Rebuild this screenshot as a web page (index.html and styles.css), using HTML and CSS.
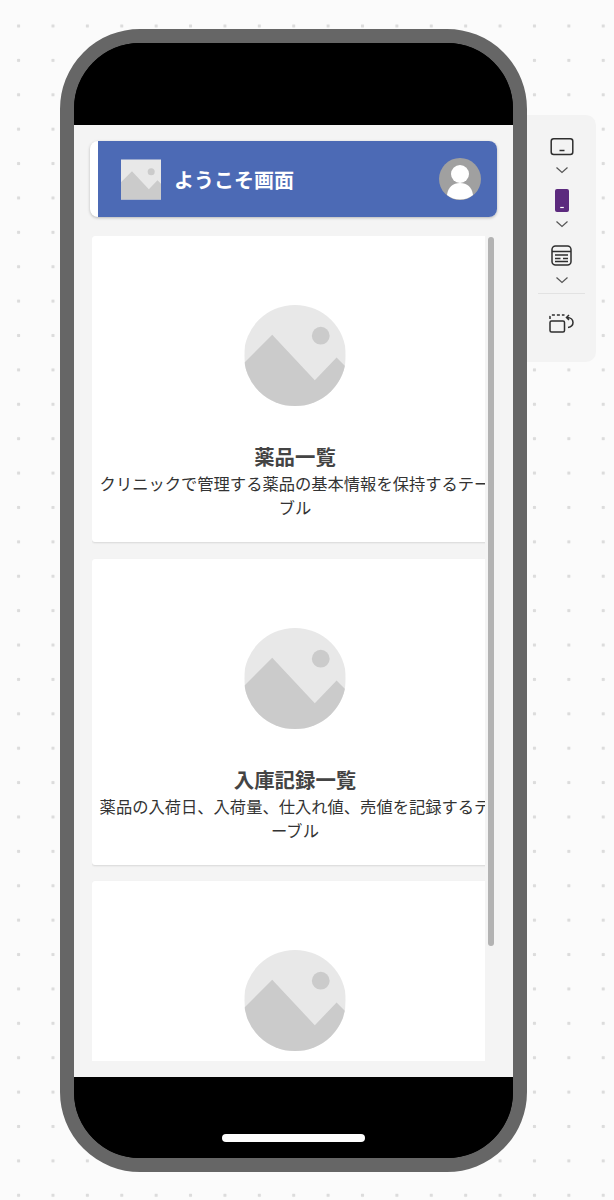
FILE: index.html
```html
<!DOCTYPE html>
<html lang="ja">
<head>
  <meta charset="UTF-8">
  <title>ようこそ画面</title>
  <link rel="stylesheet" href="styles.css">
</head>
<body>
  <svg class="defs" width="0" height="0">
    <symbol id="placeholder" viewBox="0 0 102 102">
      <rect width="102" height="102" fill="#e8e8e8"/>
      <circle cx="77" cy="31" r="9" fill="#cbcbcb"/>
      <path d="M0 58 28 30 71 76 93 53 102 62V102H0Z" fill="#cbcbcb"/>
    </symbol>
  </svg>

  <div class="stage">
    <div class="phone">
      <div class="bezel-top"></div>

      <div class="screen">
        <div class="header">
          <div class="header-bar">
            <svg class="header-img"><use href="#placeholder"/></svg>
            <div class="header-title">ようこそ画面</div>
            <svg class="avatar" viewBox="0 0 42 42">
              <circle cx="21" cy="21" r="21" fill="#a0a0a0"/>
              <circle cx="21" cy="16" r="9" fill="#fff"/>
              <path d="M8 37C9 29 14 25 21 25S33 29 34 37A21 21 0 0 1 8 37Z" fill="#fff"/>
            </svg>
          </div>
        </div>

        <div class="content">
          <div class="list">
            <div class="card">
              <svg class="card-img"><use href="#placeholder"/></svg>
              <div class="card-title">薬品一覧</div>
              <div class="card-text">クリニックで管理する薬品の基本情報を保持するテー<br>ブル</div>
            </div>
            <div class="card">
              <svg class="card-img"><use href="#placeholder"/></svg>
              <div class="card-title">入庫記録一覧</div>
              <div class="card-text">薬品の入荷日、入荷量、仕入れ値、売値を記録するテ<br>ーブル</div>
            </div>
            <div class="card">
              <svg class="card-img"><use href="#placeholder"/></svg>
            </div>
          </div>
          <div class="scrollbar"></div>
        </div>
      </div>

      <div class="bezel-bottom">
        <div class="home-bar"></div>
      </div>
    </div>

    <div class="toolbar">
      <svg class="tool" width="24" height="18" viewBox="0 0 24 18">
        <rect x="1.200" y="0.800" width="21.600" height="15.600" rx="2.500" class="line"/>
        <path d="M9.500 12.500h5" class="line"/>
      </svg>
      <svg class="chevron" width="14" height="8" viewBox="0 0 14 8"><path d="M1.500 1.500 7 6.500l5.500-5" class="thin"/></svg>

      <svg class="tool tool-phone" width="14" height="23" viewBox="0 0 14 23">
        <rect width="14" height="23" rx="2" fill="#5c2a7e"/>
        <path d="M5.200 18.500h3.600" stroke="#fff" stroke-width="1.200"/>
      </svg>
      <svg class="chevron chevron-tight" width="14" height="8" viewBox="0 0 14 8"><path d="M1.500 1.500 7 6.500l5.500-5" class="thin"/></svg>

      <svg class="tool tool-table" width="21" height="21" viewBox="0 0 21 21">
        <rect x="1" y="1" width="19" height="19" rx="3.500" class="line"/>
        <path d="M1 6.500h19M4 10h13M4 13.500h5.500M12 13.500h5M4 16.500h13" class="line"/>
      </svg>
      <svg class="chevron" width="14" height="8" viewBox="0 0 14 8"><path d="M1.500 1.500 7 6.500l5.500-5" class="thin"/></svg>

      <div class="tool-divider"></div>

      <svg class="tool" width="25" height="19" viewBox="0 0 25 19">
        <path d="M1 5V2.500A1.500 1.500 0 0 1 2.500 1H15.500" class="line dashed"/>
        <rect x="1" y="7" width="14.500" height="11" rx="1.500" class="line"/>
        <path d="M18 3.500C22 3.500 24 6 24 8.500S22 13 19 13.500M20 1 17.500 3.500 20 6" class="line"/>
      </svg>
    </div>
  </div>
</body>
</html>
```

FILE: styles.css
```css
html, body {
  margin: 0;
  padding: 0;
}

body {
  height: 1200px;
  overflow: hidden;
  background-color: #fbfbfb;
  background-image: radial-gradient(circle at center, #dcdcdc 1.6px, transparent 2px);
  background-size: 34.4px 34.4px;
  background-position: 1.4px 8.8px;
  font-family: "Noto Sans CJK JP", "Noto Sans", sans-serif;
}

.defs {
  position: absolute;
}

.stage {
  display: flex;
  align-items: flex-start;
  padding: 29px 0 0 60px;
}

.phone {
  box-sizing: border-box;
  width: 467px;
  height: 1143px;
  border: 14px solid #666;
  border-radius: 80px;
  overflow: hidden;
  background: #000;
  display: flex;
  flex-direction: column;
}

.bezel-top {
  height: 82px;
  flex: none;
  background: #000;
}

.bezel-bottom {
  flex: 1;
  background: #000;
  display: flex;
  justify-content: center;
  padding-top: 57px;
}

.home-bar {
  width: 143px;
  height: 8px;
  margin-right: 1px;
  border-radius: 4px;
  background: #fff;
}

.screen {
  height: 952px;
  flex: none;
  box-sizing: border-box;
  padding: 16px;
  background: #f4f4f4;
}

.header {
  height: 76px;
  background: #fff;
  border-radius: 8px;
  box-shadow: 0 1px 3px rgba(0, 0, 0, 0.25);
  display: flex;
}

.header-bar {
  flex: 1;
  margin-left: 8px;
  padding: 0 16px 0 23px;
  background: #4c6ab5;
  border-radius: 0 8px 8px 0;
  display: flex;
  align-items: center;
}

.header-img {
  width: 40px;
  height: 41px;
  flex: none;
}

.header-title {
  flex: 1;
  margin-left: 13px;
  color: #fff;
  font-size: 20px;
  font-weight: 700;
}

.avatar {
  width: 42px;
  height: 42px;
  flex: none;
}

.content {
  display: flex;
  align-items: flex-start;
  margin-top: 19px;
  margin-left: 2px;
  height: 825px;
}

.list {
  width: 393px;
  height: 825px;
  overflow: hidden;
  flex: none;
}

.card {
  box-sizing: border-box;
  width: 406px;
  height: 306px;
  margin-bottom: 16.5px;
  padding: 69px 6px 0;
  background: #fff;
  border-radius: 3px;
  box-shadow: 0 1px 2px rgba(0, 0, 0, 0.12);
  display: flex;
  flex-direction: column;
  align-items: center;
}

.card-img {
  width: 102px;
  height: 101px;
  flex: none;
  border-radius: 50%;
}

.card-title {
  margin-top: 36px;
  color: #444;
  font-size: 20.4px;
  font-weight: 700;
  line-height: 28px;
  white-space: nowrap;
}

.card-text {
  margin-top: 1px;
  color: #333;
  font-size: 16.3px;
  line-height: 24px;
  text-align: center;
  white-space: nowrap;
}

.scrollbar {
  width: 6px;
  height: 709px;
  margin: 1px 0 0 3px;
  border-radius: 3px;
  background: #b3b3b3;
  flex: none;
}

.toolbar {
  width: 69px;
  height: 247px;
  margin-top: 86px;
  box-sizing: border-box;
  padding-top: 23px;
  background: #f3f3f3;
  border-radius: 0 10px 10px 0;
  display: flex;
  flex-direction: column;
  align-items: center;
}

.line {
  fill: none;
  stroke: #2e2e2e;
  stroke-width: 1.5;
}

.dashed {
  stroke-dasharray: 3 2;
}

.thin {
  fill: none;
  stroke: #555;
  stroke-width: 1.2;
}

.chevron {
  margin-top: 10px;
}

.chevron-tight {
  margin-top: 8px;
}

.tool-phone {
  margin-top: 15px;
}

.tool-table {
  margin-top: 17px;
}

.tool-divider {
  width: 47px;
  height: 1px;
  margin: 9px 0 20px;
  background: #e2e2e2;
}
```
